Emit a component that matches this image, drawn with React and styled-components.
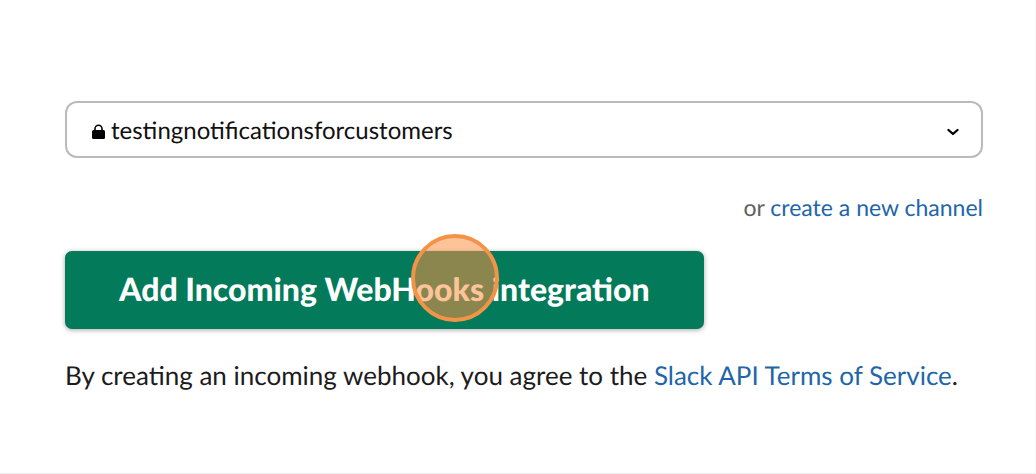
import React, { useState } from 'react';
import styled, { createGlobalStyle } from 'styled-components';

const GlobalStyle = createGlobalStyle`
  * {
    box-sizing: border-box;
  }

  body {
    margin: 0;
    background: #fff;
    color: #1d1c1d;
    font-family: Lato, 'Liberation Sans', sans-serif;
    font-size: 26px;
    line-height: 32px;
    text-rendering: geometricPrecision;
  }
`;

const Page = styled.main`
  min-height: 100vh;
  padding: 101px 52px 0 65px;
  border-right: 1px solid #f8f8f8;
  border-bottom: 1px solid #ececec;
`;

const SelectBox = styled.div`
  display: grid;
  align-items: center;

  > * {
    grid-area: 1 / 1;
  }
`;

const ChannelSelect = styled.select`
  appearance: none;
  width: 100%;
  height: 57px;
  padding: 2px 60px 0 44px;
  border: 2px solid #bbb;
  border-radius: 12px;
  background: #fff;
  color: #111;
  font: inherit;
  font-size: 24px;
  text-rendering: inherit;
`;

const LockIcon = styled.svg`
  width: 13px;
  height: 16px;
  margin: 4px 0 0 27px;
  pointer-events: none;
`;

const Chevron = styled.svg`
  width: 12px;
  height: 8px;
  justify-self: end;
  margin: 4px 24px 0 0;
  pointer-events: none;
`;

const Link = styled.a`
  color: #1f66a9;
  text-decoration: none;
`;

const CreateChannel = styled.p`
  margin: 33px 0 28px;
  color: #616061;
  font-size: 23px;
  text-align: right;
`;

const ButtonWrap = styled.div`
  position: relative;
  width: fit-content;
`;

const AddButton = styled.button`
  display: block;
  height: 78px;
  padding: 0 54px 2px;
  border: 0;
  border-radius: 7px;
  background: #037a5a;
  box-shadow: 0 1px 5px rgba(0, 0, 0, 0.35);
  color: #fff;
  font: inherit;
  font-size: 32px;
  font-weight: 900;
  text-rendering: inherit;
  white-space: nowrap;
`;

const ClickMarker = styled.span`
  position: absolute;
  top: -17px;
  left: 346px;
  width: 88px;
  height: 88px;
  border: 4px solid #f29447;
  border-radius: 50%;
  background: rgba(255, 145, 68, 0.54);
  pointer-events: none;
`;

const Terms = styled.p`
  margin: 30px 0 0;
`;

const App = () => {
  const [channel, setChannel] = useState('testingnotificationsforcustomers');

  return (
    <>
      <GlobalStyle />
      <Page>
        <SelectBox>
          <ChannelSelect
            aria-label='Channel'
            value={channel}
            onChange={(e) => setChannel(e.target.value)}
          >
            <option>testingnotificationsforcustomers</option>
          </ChannelSelect>
          <LockIcon viewBox='0 0 13 16' aria-hidden='true'>
            <rect y='6' width='13' height='9' rx='1.5' fill='#000' />
            <path d='M3 7V4.7a3.5 3.5 0 0 1 7 0V7' fill='none' stroke='#000' strokeWidth='1.6' />
          </LockIcon>
          <Chevron viewBox='0 0 12 8' aria-hidden='true'>
            <path
              d='M1.5 2L6 6l4.5-4'
              fill='none'
              stroke='#000'
              strokeWidth='2.3'
              strokeLinecap='round'
              strokeLinejoin='round'
            />
          </Chevron>
        </SelectBox>
        <CreateChannel>
          or <Link href='#create'>create a new channel</Link>
        </CreateChannel>
        <ButtonWrap>
          <AddButton type='button'>Add Incoming WebHooks integration</AddButton>
          <ClickMarker />
        </ButtonWrap>
        <Terms>
          By creating an incoming webhook, you agree to the{' '}
          <Link href='#terms'>Slack API Terms of Service</Link>.
        </Terms>
      </Page>
    </>
  );
};

export default App;
